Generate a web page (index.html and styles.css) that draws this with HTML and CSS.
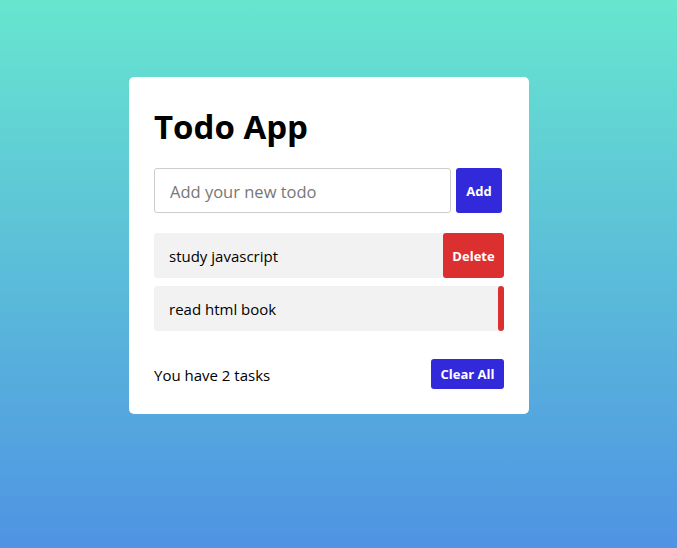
FILE: index.html
```
<!DOCTYPE html>
<html lang="en">
<head>
<meta charset="utf-8">
<title>Todo App</title>
<link rel="stylesheet" href="styles.css">
</head>
<body>
<div class="wrapper">
  <h1 class="title">Todo App</h1>
  <div class="input-field">
    <input type="text" class="todo-input" placeholder="Add your new todo">
    <button class="add-btn">Add</button>
  </div>
  <ul class="todo-list">
    <li class="todo-item"><span class="todo-text">study javascript</span><button class="delete-btn show">Delete</button></li>
    <li class="todo-item"><span class="todo-text">read html book</span><button class="delete-btn peek" aria-label="Delete"></button></li>
  </ul>
  <div class="footer">
    <span class="count">You have 2 tasks</span>
    <button class="clear-btn">Clear All</button>
  </div>
</div>
</body>
</html>
```

FILE: styles.css
```
* { box-sizing: border-box; margin: 0; padding: 0; }
html, body { height: 100%; }
body {
  font-family: "Open Sans", "Noto Sans", sans-serif;
  background: linear-gradient(to bottom, #67e6cf 0%, #4f93e3 100%);
  padding-top: 77px;
}
.wrapper {
  width: 400px;
  margin-left: 129px;
  background: #fff;
  border-radius: 5px;
  padding: 25px;
}
.title {
  font-size: 33px;
  font-weight: 700;
  color: #000;
  line-height: 46px;
  margin-top: 2px;
}
.input-field {
  display: flex;
  height: 45px;
  margin-top: 18px;
}
.todo-input {
  width: 297px;
  height: 45px;
  border: 1px solid #ccc;
  border-radius: 3px;
  font-family: inherit;
  font-size: 16.5px;
  padding-left: 15px;
  padding-top: 1px;
  outline: none;
  color: #333;
}
.todo-input::placeholder { color: #777; }
.add-btn {
  width: 46px;
  height: 45px;
  margin-left: 5px;
  border: none;
  border-radius: 3px;
  background: #3129da;
  color: #fff;
  font-family: inherit;
  font-weight: 700;
  font-size: 13px;
}
.todo-list { list-style: none; margin-top: 20px; }
.todo-item {
  position: relative;
  height: 45px;
  line-height: 47px;
  background: #f2f2f2;
  border-radius: 3px;
  padding: 0 15px;
  margin-bottom: 8px;
  overflow: hidden;
  font-size: 15px;
  color: #000;
}
.delete-btn {
  position: absolute;
  top: 0;
  height: 45px;
  width: 61px;
  border: none;
  border-radius: 3px;
  background: #db2f30;
  color: #fff;
  font-family: inherit;
  font-weight: 700;
  font-size: 13px;
  line-height: normal;
}
.delete-btn.show { right: 0; }
.delete-btn.peek { right: -55px; }
.footer {
  display: flex;
  justify-content: space-between;
  align-items: center;
  margin-top: 28px;
}
.count { font-size: 15px; color: #000; padding-top: 2px; }
.clear-btn {
  height: 30px;
  padding: 0 9.5px;
  border: none;
  border-radius: 3px;
  background: #3129da;
  color: #fff;
  font-family: inherit;
  font-weight: 700;
  font-size: 13px;
}
```
